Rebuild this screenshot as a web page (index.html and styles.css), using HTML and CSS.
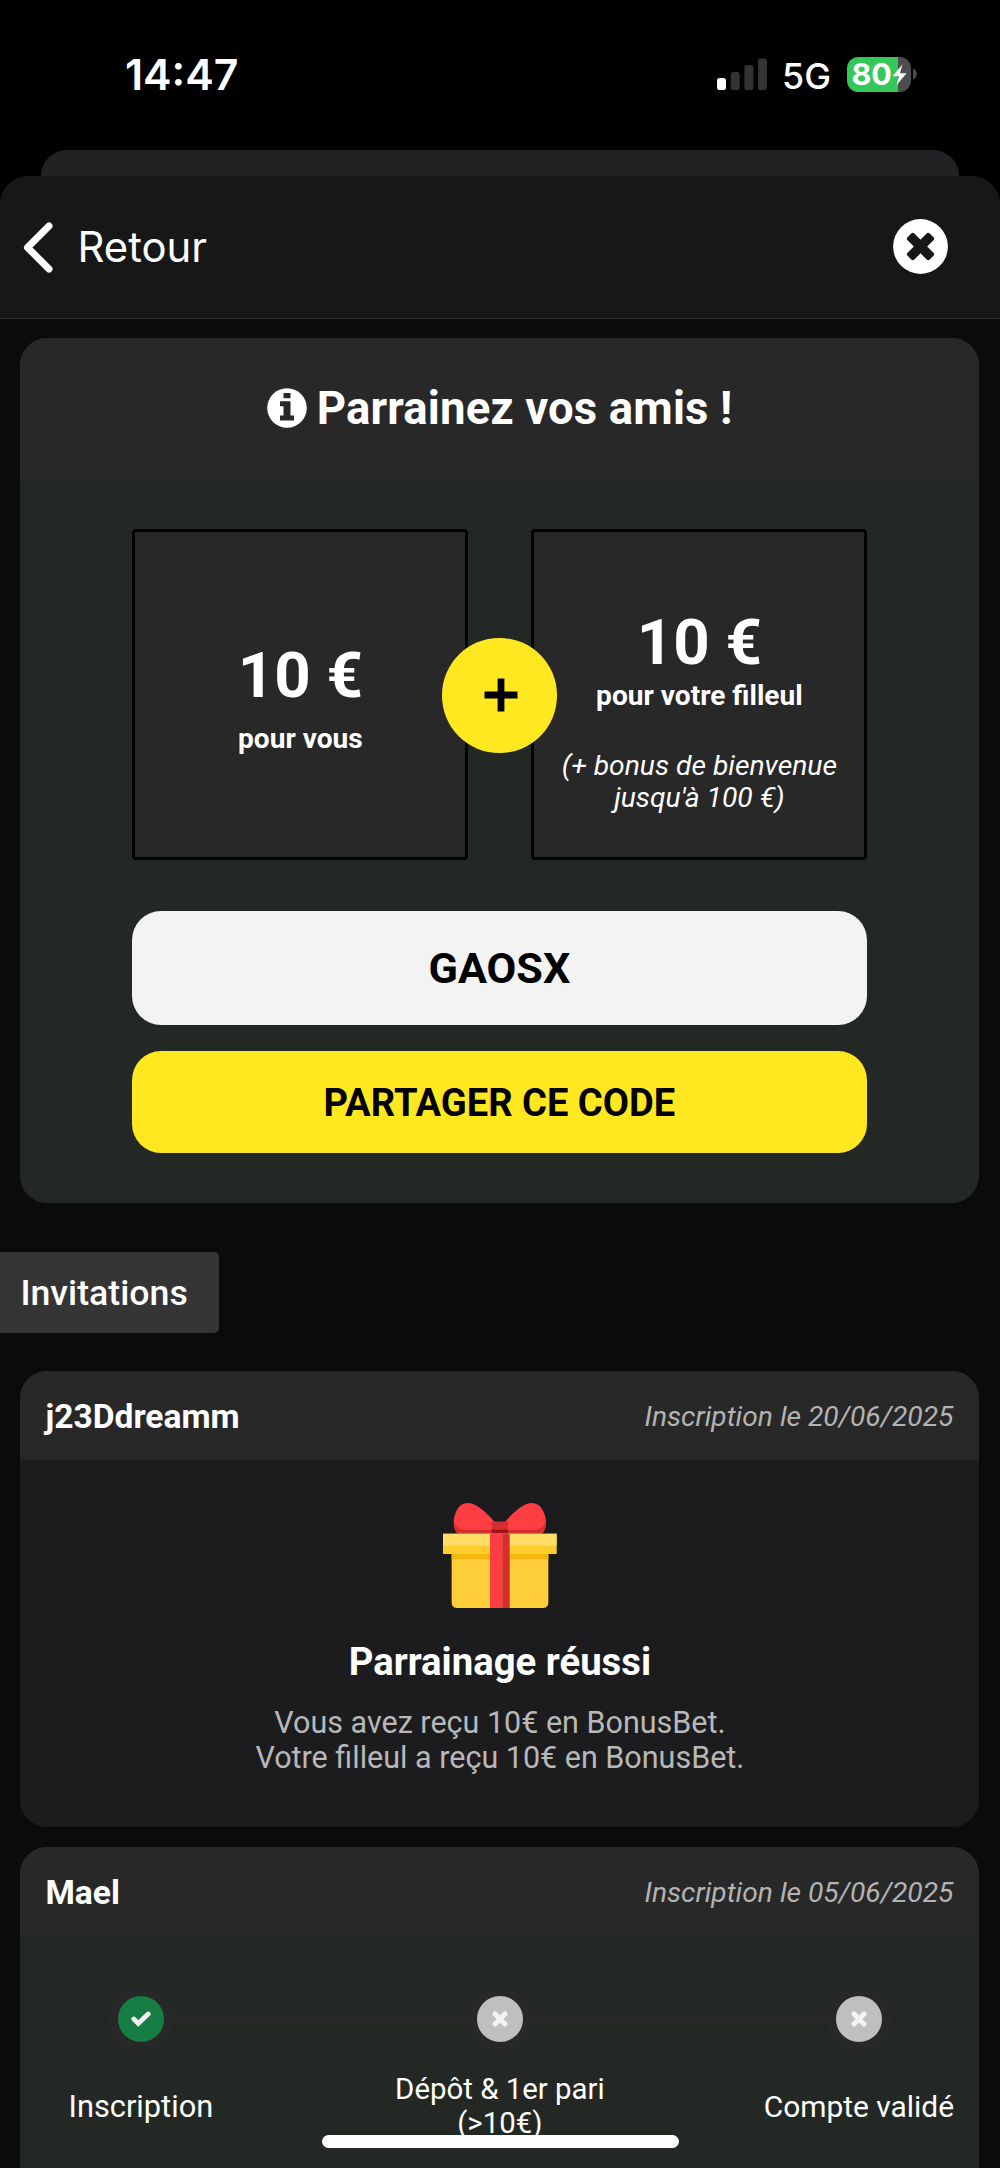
FILE: index.html
```html
<!DOCTYPE html>
<html lang="fr">
<head>
<meta charset="utf-8">
<title>Parrainage</title>
<link rel="stylesheet" href="styles.css">
</head>
<body>
<div class="statusbar">
  <span class="clock">14:47</span>
  <div class="indicators">
    <svg class="signal" width="50" height="32" viewBox="0 0 50 32">
      <rect x="0" y="20" width="9" height="12" rx="2.8" fill="#fff"/>
      <rect x="13.7" y="14" width="9" height="18" rx="2.8" fill="#333"/>
      <rect x="27.4" y="7" width="9" height="25" rx="2.8" fill="#333"/>
      <rect x="41" y="0.5" width="9" height="31.5" rx="2.8" fill="#333"/>
    </svg>
    <span class="network">5G</span>
    <div class="battery">
      <span class="level">80</span>
      <svg class="bolt" width="15" height="22" viewBox="0 0 15 22"><path d="M10.4 0.4 0.5 12.2 7 12.2 4.4 21.6 14.5 9.3 8 9.3Z" fill="#fff"/></svg>
    </div>
    <svg class="nub" width="4" height="12" viewBox="0 0 4 12"><path d="M0 0.5C5 2.5 5 9.5 0 11.5Z" fill="#4d4d4d"/></svg>
  </div>
</div>
<div class="sheet-behind"></div>
<main class="sheet">
  <header class="nav">
    <div class="back">
      <svg width="32" height="52" viewBox="0 0 32 52"><path d="M28 5 6.5 26.5 28 48" fill="none" stroke="#fff" stroke-width="7" stroke-linecap="round" stroke-linejoin="round"/></svg>
      <span>Retour</span>
    </div>
    <svg class="close" width="55" height="55" viewBox="0 0 55 55">
      <circle cx="27.5" cy="27.5" r="27.4" fill="#fff"/>
      <g fill="#171717" transform="rotate(45 27.5 27.5)"><rect x="11.8" y="22.7" width="31.4" height="9.6" rx="2.2"/><rect x="22.7" y="11.8" width="9.6" height="31.4" rx="2.2"/></g>
    </svg>
  </header>

  <section class="card promo">
    <h1 class="promo-title">
      <svg width="40" height="40" viewBox="0 0 40 40"><circle cx="20" cy="20" r="19.8" fill="#fff"/><path d="M16.5 5h7v5.2h-7zM13 13.3h10.5v14.2h3.5v5H13v-5h3.5v-9.2H13z" fill="#282828"/></svg>
      <span>Parrainez vos amis !</span>
    </h1>
    <div class="promo-body">
      <div class="rewards">
        <div class="reward reward-you">
          <div class="amount">10 €</div>
          <div class="who">pour vous</div>
        </div>
        <div class="reward reward-friend">
          <div class="amount">10 €</div>
          <div class="who">pour votre filleul</div>
          <div class="note">(+ bonus de bienvenue<br>jusqu'à 100 €)</div>
        </div>
        <div class="plus"><svg width="34" height="34" viewBox="0 0 34 34"><path d="M0.5 17h33M17 0.5v33" stroke="#000" stroke-width="6.8"/></svg></div>
      </div>
      <div class="code">GAOSX</div>
      <div class="share">PARTAGER CE CODE</div>
    </div>
  </section>

  <h2 class="section-tab">Invitations</h2>

  <section class="card invite">
    <div class="invite-head"><span class="name">j23Ddreamm</span><span class="date">Inscription le 20/06/2025</span></div>
    <div class="success">
      <svg class="gift" width="114" height="105.4" viewBox="38 38 342 316">
        <path d="M84 132C68 118 67 92 75 70 84 44 104 32 128 41 150 50 174 72 192 94H225C243 72 267 50 289 41 313 32 333 44 342 70 350 92 349 118 333 132Z" fill="#ff3e43"/>
        <path d="M84 132C73 123 70 108 71 94 76 110 88 118 104 118H313C329 118 341 110 346 94 347 108 344 123 333 132Z" fill="#d52e2e"/>
        <path d="M184 94h49v26h-49z" fill="#d52e2e"/><path d="M184 118h49v14h-49z" fill="#a0101a"/>
        <path d="M64 188H354V336Q354 353 337 353H81Q64 353 64 336Z" fill="#ffcf3a"/>
        <path d="M64 190h290v17H64z" fill="#f5b70d"/>
        <path d="M38 130h341v61H38z" fill="#ffcd2c"/><path d="M38 130h341v36H38z" fill="#ffdd67"/>
        <path d="M179 130h38v223h-38z" fill="#ff3e43"/><path d="M216 130h22v223h-22z" fill="#d52e2e"/>
      </svg>
      <h3>Parrainage réussi</h3>
      <p>Vous avez reçu 10€ en BonusBet.<br>Votre filleul a reçu 10€ en BonusBet.</p>
    </div>
  </section>

  <section class="card invite progress">
    <div class="invite-head"><span class="name">Mael</span><span class="date">Inscription le 05/06/2025</span></div>
    <div class="steps">
      <div class="step">
        <div class="dot done"><svg width="20" height="16" viewBox="0 0 20 16"><path d="M2.8 8 7.3 12.5 17.2 3" fill="none" stroke="#f3f3f3" stroke-width="4.8" stroke-linejoin="miter" stroke-linecap="round"/></svg></div>
        <div class="label label-first">Inscription</div>
      </div>
      <div class="step">
        <div class="dot"><svg width="16" height="16" viewBox="0 0 16 16"><path d="M3 3 13 13M13 3 3 13" stroke="#f3f3f3" stroke-width="5" stroke-linecap="round"/></svg></div>
        <div class="label label-mid">Dépôt &amp; 1er pari<br>(&gt;10€)</div>
      </div>
      <div class="step">
        <div class="dot"><svg width="16" height="16" viewBox="0 0 16 16"><path d="M3 3 13 13M13 3 3 13" stroke="#f3f3f3" stroke-width="5" stroke-linecap="round"/></svg></div>
        <div class="label">Compte validé</div>
      </div>
    </div>
  </section>
</main>
<div class="home-indicator"></div>
</body>
</html>
```
FILE: styles.css
```css
* { box-sizing: border-box; margin: 0; padding: 0; }
html { background: #000; }
body {
  width: 1000px; height: 2168px; overflow: hidden; position: relative;
  background: #000; color: #fff; font-family: Roboto, sans-serif;
}
svg { display: block; flex: none; }

.statusbar {
  height: 150px; padding: 0 83px 0 125px;
  display: flex; justify-content: space-between; align-items: flex-start;
  font-family: Inter, sans-serif;
}
.clock { font-size: 42.8px; font-weight: 600; line-height: 50px; margin-top: 50px; }
.indicators { display: flex; padding-top: 57px; }
.signal { margin-top: 1px; margin-right: 15px; }
.network { font-size: 35.8px; font-weight: 450; line-height: 38px; width: 64.5px; }
.battery {
  width: 64px; height: 34.5px; border-radius: 11.5px; display: flex; align-items: center;
  padding-left: 5px; background: linear-gradient(90deg, #35c759 51px, #4d4d4d 51px);
}
.level { font-size: 30.5px; font-weight: 700; line-height: 34px; letter-spacing: -0.2px; width: 40px; }
.bolt { margin-top: 1px; }
.nub { margin: 11px 0 0 2.5px; }

.sheet-behind { height: 40px; margin: 0 41px -14.5px; border-radius: 26px 26px 0 0; background: #222224; }

.sheet { position: relative; background: #0b0b0b; border-radius: 28px 28px 0 0; height: 2000px; overflow: hidden; }
.nav {
  height: 143.5px; background: #171717; border-bottom: 1px solid #303030;
  padding: 0 52px 0 20.5px; display: flex; align-items: center; justify-content: space-between;
}
.back {
  display: flex; align-items: center; gap: 25px;
  font-family: Inter, sans-serif; font-size: 41.8px; line-height: 52px;
}

.card { margin: 0 20.6px 0 20.4px; border-radius: 27px; overflow: hidden; background: #242824; }
.promo { margin-top: 19px; height: 865px; }
.promo-title {
  height: 140px; background: #282828; display: flex; align-items: center; justify-content: center; gap: 9.5px;
  font-size: 45.5px; font-weight: 700; line-height: 56px; letter-spacing: 0.15px;
}
.promo-title span { padding-top: 1px; }
.promo-body { padding: 51px 112px 0; }
.rewards { position: relative; display: flex; justify-content: space-between; height: 331px; text-align: center; }
.reward { width: 336px; background: #282828; border: 3px solid #000; border-radius: 4px; }
.reward-you { padding-top: 106px; }
.reward-friend { padding-top: 73px; }
.amount { font-size: 63.6px; font-weight: 700; line-height: 75px; }
.who { font-size: 28.1px; font-weight: 700; line-height: 32px; }
.reward-you .who { margin-top: 10px; }
.note { font-size: 28.25px; font-style: italic; line-height: 32.5px; margin-top: 37.5px; }
.plus {
  position: absolute; left: 310px; top: 109px; width: 114.5px; height: 114.5px; border-radius: 50%;
  background: #ffe81f; display: flex; align-items: center; justify-content: center; padding-left: 3px;
}
.code, .share { border-radius: 29px; color: #000; text-align: center; font-weight: 700; padding: 1px 1px 0 0; }
.code { margin-top: 50.5px; height: 114.5px; line-height: 114.5px; background: #f3f3f3; font-size: 43.2px; }
.share { margin-top: 25.5px; height: 102px; line-height: 102px; background: #ffe81f; font-size: 38.1px; }

.section-tab {
  margin-top: 48.5px; width: 219px; height: 81.5px; line-height: 82.5px; padding-left: 20.4px;
  background: #353535; border-radius: 0 5px 5px 0; font-size: 35.7px; font-weight: 500;
}

.invite { margin-top: 38px; height: 455.5px; background: #1c1c1e; }
.invite-head {
  height: 89px; padding: 1px 26px 0 25px; background: #282828;
  display: flex; align-items: center; justify-content: space-between;
}
.name { font-size: 33.6px; font-weight: 700; }
.date { font-size: 28.2px; font-style: italic; color: #b3b3b3; padding-top: 1px; }
.success { padding-top: 42.5px; text-align: center; display: flex; flex-direction: column; align-items: center; }
.success h3 { margin-top: 32px; font-size: 38.3px; font-weight: 700; line-height: 44px; }
.success p { margin-top: 21px; font-size: 30.5px; line-height: 35.5px; color: #b8b8b8; }

.progress { margin-top: 20.5px; background: #242824; }
.steps {
  display: flex; justify-content: space-between; padding-top: 51px;
  background: linear-gradient(#282828, #282828) no-repeat 121px 78px / 717px 10px;
}
.step { width: 241px; display: flex; flex-direction: column; align-items: center; text-align: center; }
.dot {
  width: 64px; height: 64px; border-radius: 50%; border: 9.5px solid #282828; background: #bfbfbf;
  display: flex; align-items: center; justify-content: center;
}
.dot.done { background: #167d45; }
.label { height: 68px; margin-top: 22px; display: flex; align-items: center; font-size: 29.9px; line-height: 33.8px; white-space: nowrap; }
.label-first { font-size: 30.8px; }
.label-mid { font-size: 29.4px; }

.home-indicator { position: absolute; left: 322px; top: 2135px; width: 357px; height: 12.5px; border-radius: 7px; background: #fff; }
```
